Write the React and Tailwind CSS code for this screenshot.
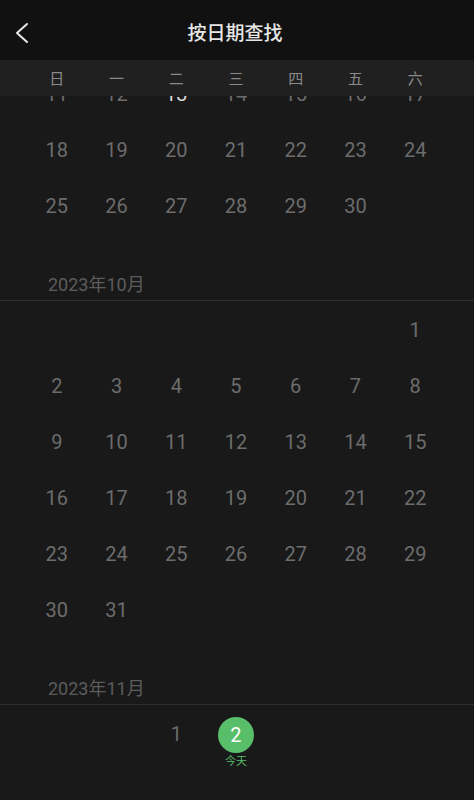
const WEEK = ["日", "一", "二", "三", "四", "五", "六"];

const months = [
  {
    label: null,
    rows: [
      [11, 12, 13, 14, 15, 16, 17],
      [18, 19, 20, 21, 22, 23, 24],
      [25, 26, 27, 28, 29, 30, null],
    ],
  },
  {
    label: "2023年10月",
    rows: [
      [null, null, null, null, null, null, 1],
      [2, 3, 4, 5, 6, 7, 8],
      [9, 10, 11, 12, 13, 14, 15],
      [16, 17, 18, 19, 20, 21, 22],
      [23, 24, 25, 26, 27, 28, 29],
      [30, 31, null, null, null, null, null],
    ],
  },
  {
    label: "2023年11月",
    rows: [[null, null, 1, 2, null, null, null]],
    today: 2,
  },
];

function Day({ day, today, bright }) {
  if (day == null) return <div />;
  if (today) {
    return (
      <div className="flex items-center justify-center pt-[3px]">
        <div className="relative w-[36px] h-[36px] rounded-full bg-[#58be6a] flex items-center justify-center text-white text-[20px]">
          {day}
          <span className="absolute left-1/2 -translate-x-1/2 top-[38px] text-[11px] leading-none whitespace-nowrap text-[#58be6a] font-['Noto_Sans_CJK_SC',sans-serif]">今天</span>
        </div>
      </div>
    );
  }
  return (
    <div className={`flex items-center justify-center pt-[2px] text-[20px] ${bright ? "text-[#d8d8d8]" : "text-[#6c6c6c]"}`}>
      {day}
    </div>
  );
}

export default function App() {
  return (
    <div className="w-[474px] h-[800px] bg-[#191919] overflow-hidden flex flex-col font-['Roboto','Noto_Sans_CJK_SC',sans-serif]">
      {/* Header */}
      <div className="h-[60px] shrink-0 bg-[#111111] relative flex items-center justify-center pt-[4px]">
        <button className="absolute left-[15px] top-[22px] text-[#e8e8e8]">
          <svg width="14" height="22" viewBox="0 0 14 22" fill="none" stroke="currentColor" strokeWidth="2" strokeLinecap="round" strokeLinejoin="round">
            <path d="M12 2 L2 11 L12 20" />
          </svg>
        </button>
        <h1 className="text-[19px] font-medium text-[#e6e6e6] font-['Noto_Sans_CJK_SC',sans-serif] -ml-[4px]">按日期查找</h1>
      </div>

      <div className="relative flex-1 overflow-hidden">
        {/* Weekday bar */}
        <div className="absolute top-0 left-0 right-0 h-[36px] bg-[#202020] z-10 grid grid-cols-7 pl-[27px] pr-[29px] items-center">
          {WEEK.map((w) => (
            <div key={w} className="text-center text-[15px] text-[#8a8a8a] font-['Noto_Sans_CJK_SC',sans-serif]">{w}</div>
          ))}
        </div>

        <div className="pt-[5px]">
          {months.map((m, mi) => (
            <div key={mi}>
              {m.label && (
                <div className="h-[68px] flex items-end pl-[48px] pb-[6px] border-b border-[#2e2e2e] text-[18px] leading-[18px] text-[#5c5c5c]">
                  {m.label}
                </div>
              )}
              {m.rows.map((row, ri) => (
                <div key={ri} className="h-[56px] grid grid-cols-7 pl-[27px] pr-[29px]">
                  {row.map((d, di) => (
                    <Day key={di} day={d} today={m.today && d === m.today} bright={mi === 0 && d === 13} />
                  ))}
                </div>
              ))}
            </div>
          ))}
        </div>
      </div>
    </div>
  );
}
